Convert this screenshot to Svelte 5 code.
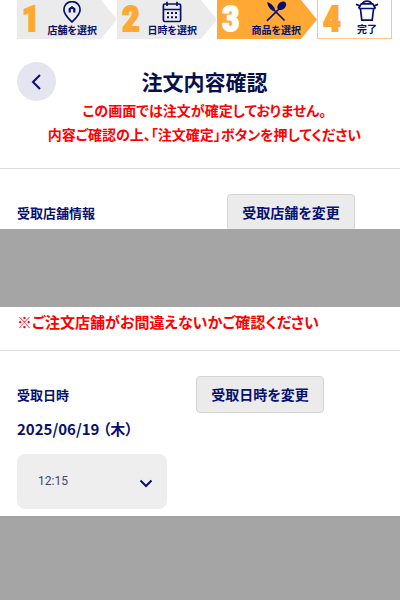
<script>
    const steps = [
        { no: 1, label: '店舗を選択', icon: 'pin' },
        { no: 2, label: '日時を選択', icon: 'calendar' },
        { no: 3, label: '商品を選択', icon: 'cutlery' },
        { no: 4, label: '完了', icon: 'box' },
    ]

    const current = 3
    let time = $state('12:15')
</script>

<ol class="steps">
    {#each steps as step (step.no)}
        <li class="step" class:current={step.no === current} class:last={step.no === steps.length}>
            <span class="number">{step.no}</span>
            <span class="caption">
                <svg width="24" height="24" viewBox="0 0 24 24" aria-hidden="true">
                    {#if step.icon === 'pin'}
                        <path d="M12 21C9 18 3.9 13.5 3.9 8.7a8.1 8.1 0 0 1 16.2 0c0 4.8-5.1 9.3-8.1 12.3z" />
                        <path d="M9.7 11.4V8l2.3-1.6L14.3 8v3.4" stroke-width="2.2" />
                    {:else if step.icon === 'calendar'}
                        <rect x="3.4" y="3" width="17.2" height="17.5" rx="1.5" />
                        <path d="M3.4 8.5h17.2M7 .8V5M17 .8V5" />
                        <path d="M7 12h10M7 16.3h10" stroke-width="2" stroke-dasharray="2 2" />
                    {:else if step.icon === 'cutlery'}
                        <path d="M6 5 20 19M16 7 3.4 19.4" stroke-linecap="round" />
                        <path d="M3.4 1C6.5 2 10.6 5.4 11 9L9.7 10.2C6.4 9 3 4.6 3.4 1z" class="solid" />
                        <ellipse cx="17.8" cy="4.8" rx="3.6" ry="5" transform="rotate(48 17.8 4.8)" class="solid" />
                    {:else}
                        <path d="M3.5 8.5h17M5.4 8.5l1.4 11.7h10.4l1.4-11.7M3.5 8.5l2.8-4.7h11.4l2.8 4.7M1 4.3l3.6 1.6M23 4.3l-3.6 1.6" />
                        <path d="M7.5 3.8c1.2-3.6 7.8-3.6 9 0" />
                    {/if}
                </svg>
                <span class="label">{step.label}</span>
            </span>
        </li>
    {/each}
</ol>

<header>
    <button class="back" type="button" aria-label="戻る">
        <svg width="20" height="20" viewBox="0 0 20 20" aria-hidden="true">
            <path d="M13 3 6 10l7 7" />
        </svg>
    </button>
    <h1>注文内容確認</h1>
</header>

<p class="notice">この画面では注文が確定しておりません。<br />内容ご確認の上、「注文確定」ボタンを押してください</p>

<section class="store">
    <div class="row">
        <h2>受取店舗情報</h2>
        <button class="change" type="button">受取店舗を変更</button>
    </div>
    <div class="mask"></div>
    <p class="warning">※ご注文店舗がお間違えないかご確認ください</p>
</section>

<section class="pickup">
    <div class="row">
        <h2>受取日時</h2>
        <button class="change" type="button">受取日時を変更</button>
    </div>
    <p class="date">2025/06/19 （木）</p>
    <div class="select">
        <select bind:value={time} aria-label="受取時間">
            <option>12:15</option>
        </select>
        <svg width="16" height="16" viewBox="0 0 16 16" aria-hidden="true">
            <path d="M2.5 5.5 8 11l5.5-5.5" />
        </svg>
    </div>
    <div class="mask tall"></div>
</section>

<style>
    :global(body) {
        background: #fff;
        color: #06106e;
        font-family: "Noto Sans CJK JP", sans-serif;
        font-feature-settings: "palt";
        font-weight: 700;
    }

    svg {
        display: block;
        fill: none;
        stroke: #06106e;
        stroke-width: 1.7;
    }

    .solid {
        fill: #06106e;
        stroke: none;
    }

    h1, h2, p {
        margin: 0;
    }

    .steps {
        display: grid;
        grid-template-columns: 4fr 4fr 4fr 3fr;
        margin: 0;
        padding: 0 8px 0 17px;
        list-style: none;
    }

    .step {
        display: flex;
        align-items: center;
        justify-content: space-between;
        box-sizing: border-box;
        height: 39px;
        padding: 0 20px 0 5px;
        background: #ebebeb;
        clip-path: polygon(0 0, 84px 0, 100% 50%, 84px 100%, 0 100%);
    }

    .step.current {
        padding-right: 16px;
        background: #ffa834;
    }

    .step.last {
        padding-right: 12px;
        border: 1px solid #ffc67c;
        border-top: 0;
        background: #fff;
        clip-path: none;
    }

    .number {
        color: #ffa834;
        font: 700 35px/39px "Roboto Condensed", Roboto, sans-serif;
        -webkit-text-stroke: 2px currentColor;
    }

    .current .number {
        color: #fff;
    }

    .caption {
        display: flex;
        flex-direction: column;
        align-items: center;
        padding-bottom: 4px;
    }

    .label {
        font-size: 10px;
        line-height: 10px;
        white-space: nowrap;
    }

    header {
        display: grid;
        grid-template-columns: 39px 1fr 39px;
        align-items: center;
        padding: 23px 8px 0 17px;
    }

    .back {
        display: grid;
        place-items: center;
        width: 39px;
        height: 39px;
        padding: 0;
        border: 0;
        border-radius: 50%;
        background: #e5e5f2;
    }

    .back svg {
        stroke-width: 2;
    }

    h1 {
        color: #06104b;
        font-size: 21px;
        line-height: 39px;
        text-align: center;
    }

    .notice {
        margin-top: -3px;
        padding: 0 8px 22px 17px;
        border-bottom: 1px solid #ddd;
        color: #f00;
        font-size: 14px;
        line-height: 24px;
        text-align: center;
    }

    .row {
        display: flex;
        align-items: center;
        gap: 127px;
        padding: 0 17px;
    }

    .store .row {
        gap: 132px;
    }

    h2 {
        font-size: 13px;
        line-height: 20px;
        white-space: nowrap;
    }

    .change {
        box-sizing: border-box;
        width: 128px;
        height: 37px;
        padding: 0 0 2px;
        border: 1px solid #d4d4d4;
        border-radius: 4px;
        background: #ebebeb;
        color: inherit;
        font: inherit;
        font-size: 14px;
        white-space: nowrap;
    }

    .store {
        padding-top: 25px;
        border-bottom: 1px solid #ddd;
    }

    /* the panel covers the lower edge of the button above it */
    .mask {
        position: relative;
        height: 78px;
        margin-top: -2px;
        background: #a5a5a5;
    }

    .warning {
        padding: 3px 17px 16px;
        color: #f00;
        font-size: 15px;
        line-height: 24px;
    }

    .pickup {
        padding-top: 25px;
    }

    .date {
        padding: 4px 17px 13px;
        font-size: 15px;
        line-height: 24px;
    }

    .select {
        position: relative;
        width: 150px;
        margin: 0 17px;
    }

    .select select {
        box-sizing: border-box;
        width: 100%;
        height: 55px;
        padding: 0 40px 2px 21px;
        border: 0;
        border-radius: 8px;
        appearance: none;
        background: #eee;
        color: #3d4579;
        font: 400 12px Roboto, sans-serif;
    }

    .select svg {
        position: absolute;
        top: 21px;
        right: 13px;
        pointer-events: none;
        stroke-width: 2;
    }

    .mask.tall {
        height: 84px;
        margin-top: 7px;
    }
</style>
